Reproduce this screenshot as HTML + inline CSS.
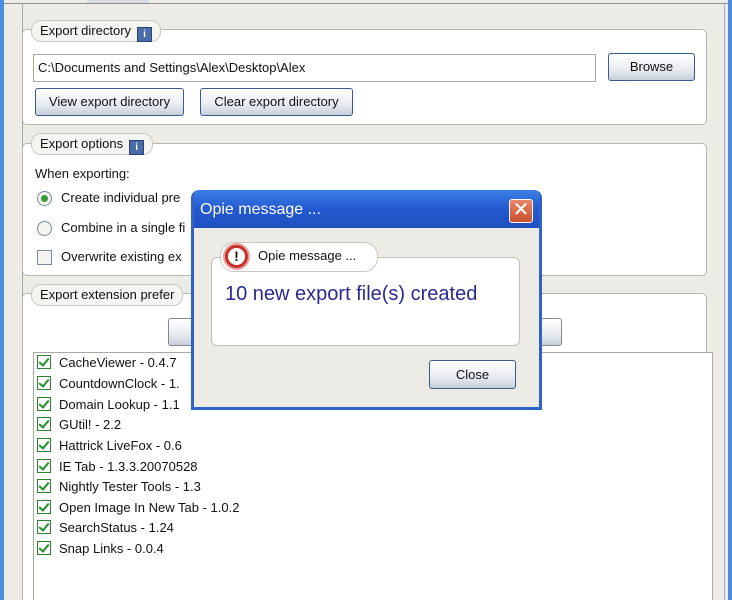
<!DOCTYPE html>
<html style="width:732px;height:600px;overflow:hidden"><head><style>
*{box-sizing:border-box}
body{margin:0;width:732px;height:600px;overflow:hidden;background:#ecebe6;font-family:"Liberation Sans",sans-serif;font-size:13px;color:#111;position:relative}
.a{position:absolute}
.grp{position:absolute;border:1px solid #b9b8b0;border-radius:5px;background:#fff}
.lbl{position:absolute;background:#f4f4f0;border:1px solid #c9c8c0;border-radius:10px;padding:0 8px;height:22px;line-height:20px;font-size:13px}
.info{display:inline-block;width:15px;height:15px;background:#4a6aa8;border:1px solid #2a4478;color:#fff;font-size:10px;line-height:13px;text-align:center;font-weight:bold;vertical-align:-2px;margin-left:6px}
.btn{position:absolute;border:1px solid #3e5a88;border-radius:3px;background:linear-gradient(#fff,#e8ebf0 60%,#c6cfdc);text-align:center;font-size:13px}
.cb{display:inline-block;width:14px;height:14px;border:1px solid #2e7d32;background:#fff;vertical-align:-2px;margin-right:8px;position:relative}
.cb:after{content:"";position:absolute;left:3px;top:0;width:4px;height:8px;border:solid #1f8f2a;border-width:0 2px 2px 0;transform:rotate(40deg)}
.item{position:absolute;left:37px;font-size:13px}
</style></head><body>
<div class="a" style="left:0;top:0;width:4px;height:600px;background:#4b8ee0"></div>
<div class="a" style="right:0;top:0;width:4px;height:600px;background:#4b8ee0"></div>
<div class="a" style="left:4px;top:3px;width:724px;height:1px;background:#8f8f8f"></div>
<div class="a" style="left:87px;top:0;width:62px;height:3px;background:#d6dbe6"></div>
<div class="a" style="left:22px;top:3px;width:1px;height:597px;background:#a8a8a8"></div>
<div class="a" style="left:724px;top:3px;width:1px;height:597px;background:#a8a8a8"></div>

<div class="grp" style="left:22px;top:29px;width:685px;height:96px"></div>
<div class="lbl" style="left:31px;top:20px">Export directory<span class="info">i</span></div>
<div class="a" style="left:33px;top:54px;width:563px;height:28px;border:1px solid #a9a9a0;background:#fff;padding-left:4px;line-height:26px;font-size:13px">C:\Documents and Settings\Alex\Desktop\Alex</div>
<div class="btn" style="left:608px;top:53px;width:87px;height:28px;line-height:26px">Browse</div>
<div class="btn" style="left:35px;top:88px;width:149px;height:28px;line-height:26px">View export directory</div>
<div class="btn" style="left:200px;top:88px;width:153px;height:28px;line-height:26px">Clear export directory</div>

<div class="grp" style="left:22px;top:143px;width:685px;height:133px"></div>
<div class="lbl" style="left:31px;top:133px">Export options<span class="info">i</span></div>
<div class="a" style="left:35px;top:166px;font-size:13px">When exporting:</div>
<div class="a" style="left:37px;top:191px;width:15px;height:15px;border:1px solid #7a8a9a;border-radius:50%;background:#f4f4f0"><div class="a" style="left:3px;top:3px;width:7px;height:7px;border-radius:50%;background:#3a9a3a"></div></div>
<div class="a" style="left:61px;top:190px;font-size:13px">Create individual pre</div>
<div class="a" style="left:37px;top:221px;width:15px;height:15px;border:1px solid #7a8a9a;border-radius:50%;background:#f4f4f0"></div>
<div class="a" style="left:61px;top:220px;font-size:13px">Combine in a single fi</div>
<div class="a" style="left:37px;top:250px;width:15px;height:15px;border:1px solid #7a8a9a;background:#f4f4f0"></div>
<div class="a" style="left:61px;top:249px;font-size:13px">Overwrite existing ex</div>

<div class="grp" style="left:22px;top:293px;width:685px;height:320px"></div>
<div class="lbl" style="left:31px;top:284px">Export extension prefer</div>
<div class="btn" style="left:168px;top:318px;width:394px;height:28px;border-color:#888"></div>
<div class="a" style="left:33px;top:352px;width:680px;height:260px;border:1px solid #a9a9a0;background:#fff"></div>
<div class="item" style="top:355px"><span class="cb"></span>CacheViewer - 0.4.7</div>
<div class="item" style="top:376px"><span class="cb"></span>CountdownClock - 1.</div>
<div class="item" style="top:397px"><span class="cb"></span>Domain Lookup - 1.1</div>
<div class="item" style="top:417px"><span class="cb"></span>GUtil! - 2.2</div>
<div class="item" style="top:438px"><span class="cb"></span>Hattrick LiveFox - 0.6</div>
<div class="item" style="top:459px"><span class="cb"></span>IE Tab - 1.3.3.20070528</div>
<div class="item" style="top:479px"><span class="cb"></span>Nightly Tester Tools - 1.3</div>
<div class="item" style="top:500px"><span class="cb"></span>Open Image In New Tab - 1.0.2</div>
<div class="item" style="top:520px"><span class="cb"></span>SearchStatus - 1.24</div>
<div class="item" style="top:541px"><span class="cb"></span>Snap Links - 0.0.4</div>

<div class="a" style="left:191px;top:190px;width:351px;height:220px;border:3px solid #2f63c8;border-top:none;border-radius:8px 8px 0 0;background:#ecebe6;overflow:hidden">
 <div class="a" style="left:0;top:0;width:345px;height:38px;background:linear-gradient(#3d7fe6,#2459d0 50%,#1f50c0)"></div>
 <div class="a" style="left:6px;top:11px;color:#fff;font-size:16px">Opie message ...</div>
 <div class="a" style="left:315px;top:9px;width:24px;height:24px;border:1px solid #fff;border-radius:3px;background:linear-gradient(#e8876a,#c9502e);color:#fff;text-align:center;line-height:21px;font-size:20px">✕</div>
 <div class="a" style="left:17px;top:67px;width:309px;height:89px;border:1px solid #c0c0b8;border-radius:6px;background:#fff"></div>
 <div class="a" style="left:26px;top:52px;width:158px;height:30px;border:1px solid #c8c8c0;border-radius:14px;background:#fff"></div>
 <div class="a" style="left:29px;top:53px;width:27px;height:27px;border-radius:50%;background:#c8302a;border:2px solid #e8a0a0"><div class="a" style="left:3px;top:3px;width:17px;height:17px;border-radius:50%;background:#fff;text-align:center;font-weight:bold;font-size:14px;line-height:17px">!</div></div>
 <div class="a" style="left:64px;top:58px;font-size:13px">Opie message ...</div>
 <div class="a" style="left:31px;top:93px;font-size:20px;color:#2a2a8e">10 new export file(s) created</div>
 <div class="btn" style="left:235px;top:170px;width:87px;height:29px;line-height:27px">Close</div>
</div>
</body></html>
